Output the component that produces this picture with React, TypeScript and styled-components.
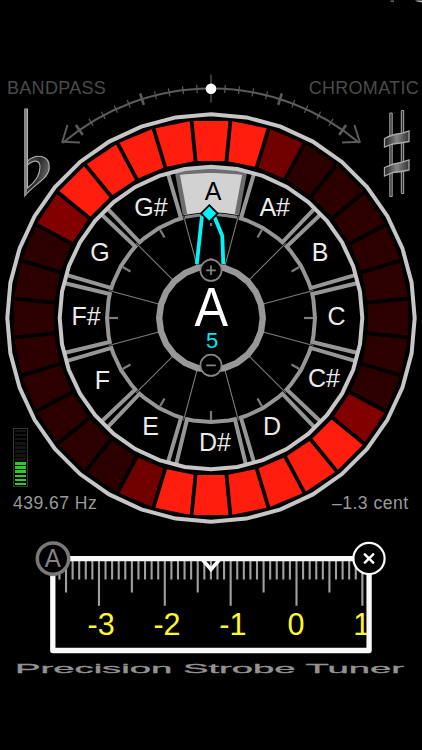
import React from "react";
import styled, { createGlobalStyle } from "styled-components";

const GlobalStyle = createGlobalStyle`
  body { margin: 0; background: #000; }
  * { box-sizing: border-box; }
  svg { display: block; }
  svg text { font-family: "Liberation Sans", Arial, sans-serif; }
`;

const Screen = styled.main`
  width: 422px;
  height: 750px;
  overflow: hidden;
  display: flex;
  flex-direction: column;
  background: #000;
  font-family: "Liberation Sans", Arial, sans-serif;
`;

const StatusStrip = styled.div`
  height: 70px;
  display: flex;
  justify-content: flex-end;
  align-items: flex-start;
`;

const Stage = styled.section`
  display: grid;
  height: 460px;
  grid-template: 460px / 422px;
  & > * { grid-area: 1 / 1; }
`;

const Corners = styled.div`
  display: flex;
  flex-direction: column;
`;

const SplitRow = styled.div<{ $pad: string }>`
  display: flex;
  justify-content: space-between;
  align-items: flex-start;
  padding: ${(p) => p.$pad};
`;

const ModeLabel = styled.span`
  font-size: 18px;
  letter-spacing: 0.3px;
  line-height: 20px;
  color: #4b4b4b;
`;

const Reading = styled.span`
  font-size: 17.6px;
  letter-spacing: 0.45px;
  line-height: 20px;
  color: #9a9a9a;
  white-space: pre;
`;

const Meter = styled.div`
  width: 15px;
  height: 59px;
  border: 1px solid #353535;
  padding: 1px;
  display: flex;
  flex-direction: column;
  justify-content: space-between;
`;

const MeterBar = styled.i<{ $on: boolean }>`
  height: 2.4px;
  background: ${(p) => (p.$on ? "#2ccb2c" : "#141414")};
`;

const RulerSection = styled.section`
  height: 130px;
`;

const CX = 211;
const CY = 318;

const pt = (r: number, deg: number): [number, number] => {
  const a = (deg * Math.PI) / 180;
  return [CX + r * Math.sin(a), CY - r * Math.cos(a)];
};
const pts = (list: [number, number][]) =>
  list.map(([r, a]) => pt(r, a).map((n) => n.toFixed(2)).join(",")).join(" ");

const ring = (r: number, sides: number) =>
  pts(Array.from({ length: sides }, (_, i) => [r, (i * 360) / sides] as [number, number]));

const segmentColor = (i: number) => {
  if (i <= 1 || i >= 28 || (i >= 12 && i <= 17)) return "#ff1d0d";
  if (i === 2 || i === 18) return "#700000";
  if (i === 11 || i === 27) return "#820000";
  return "#2d0000";
};

const segment = (i: number) => {
  const a = i * 11.25;
  const corner = (r: number, s: number): [number, number] => {
    const half = r * Math.tan((5.625 * Math.PI) / 180) - 1.9;
    return [Math.hypot(r, half), a + (s * Math.atan2(half, r) * 180) / Math.PI];
  };
  return pts([corner(197, -1), corner(197, 1), corner(157, 1), corner(157, -1)]);
};

const notes: [string, number, number][] = [
  ["A", 213, 200], ["A#", 274.7, 215.7], ["B", 320, 261], ["C", 336.5, 324.5],
  ["C#", 324, 387], ["D", 272, 434.5], ["D#", 215, 451], ["E", 150.5, 434.5],
  ["F", 102.5, 388.5], ["F#", 86, 324.5], ["G", 100, 261], ["G#", 151, 215.7],
];

const cell = (c: number): [number, number][] => [
  [151, c - 13.4], [104, c - 13.3], [104, c - 10], [104, c], [104, c + 10],
  [104, c + 13.3], [151, c + 13.4],
];

const line = (r1: number, r2: number, deg: number) => {
  const [x1, y1] = pt(r1, deg);
  const [x2, y2] = pt(r2, deg);
  return { x1, y1, x2, y2 };
};

const arcTicks = Array.from({ length: 21 }, (_, i) => i - 10);

function Dial() {
  const [ax, ay] = pt(229.5, -40.3);
  const [bx, by] = pt(229.5, 40.3);
  return (
    <svg width="422" height="460" viewBox="0 70 422 460">
      <g fill="none" stroke="#5b5b5b" strokeWidth="2">
        <path d={`M${ax} ${ay}A229.5 229.5 0 0 1 ${bx} ${by}`} />
        <path d="M67.5 125L62.3 141.8L80 142.6M354.5 125L359.7 141.8L342 142.6" />
        {arcTicks.map((i) => {
          const major = i % 5 === 0;
          const reach = i === 0 ? 14 : major ? 6 : 4;
          return (
            <line key={i} {...line(229.5 - reach, 229.5 + reach, i * 3.5)}
              strokeWidth={major && i !== 0 ? 2.6 : 1.2} />
          );
        })}
      </g>
      <circle cx="211" cy="88.8" r="5.3" fill="#fff" />

      {Array.from({ length: 32 }, (_, i) => (
        <polygon key={i} points={segment(i)} fill={segmentColor(i)} />
      ))}

      <g fill="none" stroke="#969696" strokeWidth="4">
        {notes.map((n, k) => (k === 0 ? null : <polyline key={k} points={pts(cell(k * 30))} />))}
      </g>
      <polygon points="176,172 246,172 238,215 224,213 211,212 198,213 184,215" fill="#d2d2d2" />
      <path d="M185 214.5L177.3 173L185 172L211 170.500L237 172L244.7 173L237 214.500" fill="none" stroke="#6d6d6d" strokeWidth="4.500" />
      <polyline points={pts([[104, -14.5], [103.5, -8], [104, 0], [103.5, 8], [104, 14.5]])} fill="none" stroke="#858585" strokeWidth="3" />

      {notes.map((n, k) => (
        <g key={k} stroke="#7c7c7c">
          <line {...line(54, 106, k * 30 + 15)} strokeWidth="1.1" />
          <line {...line(k ? 93 : 92, k ? 102 : 95, k * 30)} strokeWidth="2.2" />
        </g>
      ))}

      <g fill="none" strokeWidth="4">
        <polygon points={ring(203.7, 36)} stroke="#c6c6c6" />
        <polygon points={ring(151.3, 36)} stroke="#c6c6c6" />
      </g>

      {notes.map(([name, x, y], k) => (
        <text key={name} x={x} y={y} fontSize="25" textAnchor="middle" fill={k ? "#ebebeb" : "#000"}>
          {name}
        </text>
      ))}

      <path d="M202 216L196.800 264M214.5 217L222.300 236L223.3 264" fill="none" stroke="#00f4fa" strokeWidth="3.800" />
      <path d="M209.3 205.2L217.6 213.5L209.3 221.8L201 213.5Z" fill="#00f4fa" stroke="#000" strokeWidth="1.8" />
      <polygon points={ring(51.8, 24)} fill="#000" stroke="#989898" strokeWidth="6.4" />
      <path d="M209 258.800H213" stroke="#a020a0" strokeWidth="1.500" />

      <g fill="#000" stroke="#858585" strokeWidth="1.7">
        <circle cx="211" cy="270.3" r="10.6" />
        <circle cx="211" cy="365.3" r="10.6" />
        <path d="M206.2 270.3H215.8M211 265.5V275.1M206.2 365.3H215.8" />
      </g>
      <text x="194.6" y="325.8" fontSize="55" textLength="33.6" lengthAdjust="spacingAndGlyphs" fill="#fff">A</text>
      <text x="212" y="347.6" fontSize="22" textAnchor="middle" fill="#00e8f0">5</text>
    </svg>
  );
}

function FlatIcon() {
  return (
    <svg width="32" height="92" viewBox="20 107 32 92">
      <defs>
        <linearGradient id="flatShade" x1="0" y1="0" x2="1" y2="1">
          <stop offset="0" stopColor="#777" />
          <stop offset=".6" stopColor="#2a2a2a" />
          <stop offset="1" stopColor="#888" />
        </linearGradient>
      </defs>
      <path d="M27.6 161C35 154 49.5 154 49.3 167.5C48.8 179 34 184 24.8 196V109H27.5V188C34 183 40 175 40 167C40 159 33 160 27.600 165Z"
        fill="url(#flatShade)" stroke="#b0b0b0" strokeWidth="1.1" />
      <path d="M26 109V194" stroke="#858585" strokeWidth="2" />
    </svg>
  );
}

function SharpIcon() {
  return (
    <svg width="30" height="92" viewBox="381 107 30 92">
      <defs>
        <linearGradient id="sharpShade" x1="0" y1="0" x2="1" y2="0">
          <stop offset="0" stopColor="#222" />
          <stop offset=".5" stopColor="#858585" />
          <stop offset="1" stopColor="#333" />
        </linearGradient>
      </defs>
      <g fill="#333" stroke="#a8a8a8" strokeWidth="1">
        <path d="M389.800 113H392.200V196.500H389.800ZM401.300 110.500H403.700V193.500H401.300Z" />
        <path fill="url(#sharpShade)" strokeWidth="1.3"
          d="M384.500 138.500Q393 134 401 133.500L409 131V141.500Q400 143 393 144L384.500 147ZM384.500 167.500Q393 163.500 401 162.500L409 160V170Q400 172 393 172.500L384.500 176Z" />
      </g>
    </svg>
  );
}

function Ruler() {
  const tick0 = 296.5;
  const step = 65.85;
  const marks = Array.from({ length: 47 }, (_, i) => i - 36);
  return (
    <svg width="422" height="130" viewBox="0 530 422 130">
      <defs>
        <clipPath id="window"><rect x="55" y="558" width="311.8" height="92" /></clipPath>
      </defs>
      <g clipPath="url(#window)">
        {marks.map((i) => (
          <line key={i} x1={tick0 + (i * step) / 10} x2={tick0 + (i * step) / 10} y1="560"
            y2={i % 10 === 0 ? 605.7 : i % 5 === 0 ? 592.6 : 579.5} stroke="#a0a0a0" strokeWidth="2.1" />
        ))}
        {[-3, -2, -1, 0, 1].map((n) => (
          <text key={n} x={tick0 + n * step + (n < 0 ? 2.2 : -0.5)} y="635" fontSize="30.5" textAnchor="middle" fill="#fff82a">
            {n}
          </text>
        ))}
        <path d="M202 559L211 569.500L220 559" fill="none" stroke="#fff" strokeWidth="3.6" />
      </g>
      <rect x="52.800" y="558.700" width="316.300" height="91.800" fill="none" stroke="#fafafa" strokeWidth="5.3" strokeLinejoin="round" />
      <circle cx="53" cy="558.700" r="15.700" fill="#000" stroke="#787878" strokeWidth="3.600" />
      <text x="52.800" y="567.300" fontSize="26" textAnchor="middle" textLength="16" lengthAdjust="spacingAndGlyphs" fill="#848484">A</text>
      <circle cx="369" cy="558.500" r="15.600" fill="#000" stroke="#fafafa" strokeWidth="2.200" />
      <path d="M364.800 554.300L373.200 562.700M373.200 554.300L364.800 562.700" stroke="#fff" strokeWidth="2.500" strokeLinecap="round" />
    </svg>
  );
}

export default function App() {
  return (
    <>
      <GlobalStyle />
      <Screen>
        <StatusStrip>
          <svg width="34" height="4" viewBox="388 0 34 4">
            <rect x="390.500" y="0.500" width="3.500" height="1.300" fill="#777" />
            <path d="M415 0.500H422V2.500L417 1.500Z" fill="#b5b5b5" />
          </svg>
        </StatusStrip>
        <Stage>
          <Dial />
          <Corners>
            <SplitRow $pad="8px 3px 0 7px">
              <ModeLabel>BANDPASS</ModeLabel>
              <ModeLabel>CHROMATIC</ModeLabel>
            </SplitRow>
            <SplitRow $pad="9px 11px 0 20px">
              <FlatIcon />
              <SharpIcon />
            </SplitRow>
            <SplitRow $pad="229px 13px 0">
              <Meter>
                {Array.from({ length: 14 }, (_, i) => <MeterBar key={i} $on={i > 7} />)}
              </Meter>
            </SplitRow>
            <SplitRow $pad="6px 13.500px 0 13px">
              <Reading>439.67 Hz</Reading>
              <Reading>–1.3 cent</Reading>
            </SplitRow>
          </Corners>
        </Stage>
        <RulerSection>
          <Ruler />
        </RulerSection>
        <svg width="422" height="24" viewBox="0 660 422 24">
          <text x="15" y="673" fontSize="13.500" textLength="389" lengthAdjust="spacingAndGlyphs" fill="#929292"
            stroke="#929292" strokeWidth="0.300">
            Precision Strobe Tuner
          </text>
        </svg>
      </Screen>
    </>
  );
}
